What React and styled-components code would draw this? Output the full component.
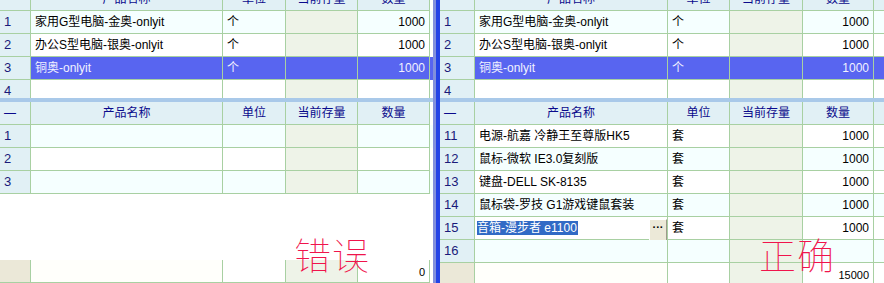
import styled, { createGlobalStyle } from 'styled-components'

const GlobalStyle = createGlobalStyle`
html, body {
  margin: 0;
  padding: 0;
  background: #ffffff;
  overflow: hidden;
}
body {
  font-family: "Liberation Sans", "Noto Sans CJK SC", sans-serif;
  font-size: 12px;
  color: #000;
}
`

const LINE = '#a8d0a2'
const HEAD_BG = '#e1f0f5'
const STOCK_BG = '#eef3e8'
const SEL_BG = '#5865f0'
const ALT_BG = '#f5ffff'
const FOOT_BG = '#ebe8d8'

const LEFT_COLS = '31px 192px 63px 72px 72px'
const RIGHT_COLS = '35px 193px 62px 73px 71px 10px'

const Page = styled.div`
position: relative;
display: flex;
width: 884px;
height: 283px;
overflow: hidden;
`
const Panel = styled.div`
display: flex;
flex-direction: column;
width: ${props => props.width}px;
flex: none;
background: #fdfffe;
`
const Splitter = styled.div`
width: 7px;
flex: none;
background: linear-gradient(to right, #8290dc 0, #8290dc 3px, #2443e6 3px, #2443e6 7px);
`
const TopGrid = styled.div`
height: 98px;
overflow: hidden;
flex: none;
`
const Shift = styled.div`
margin-top: -12px;
`
const HDivider = styled.div`
height: 4px;
background: #a9c9e9;
flex: none;
`
const BottomGrid = styled.div`
flex: 1;
display: flex;
flex-direction: column;
min-height: 0;
`
const Spacer = styled.div`
flex: 1;
background: #ffffff;
`
const Row = styled.div`
display: grid;
grid-template-columns: ${props => props.cols};
height: 23px;
flex: none;
background: ${props => props.sel ? SEL_BG : props.bg || '#ffffff'};
color: ${props => props.sel ? '#f2f2ff' : '#000'};
`
const Cell = styled.div`
box-sizing: border-box;
height: 23px;
border-right: 1px solid ${LINE};
border-bottom: 1px solid ${LINE};
line-height: 22px;
white-space: nowrap;
overflow: hidden;
padding: 0 4px;
`
const HeadCell = styled(Cell)`
background: ${HEAD_BG};
color: #0a0a8c;
text-align: ${props => props.left ? 'left' : 'center'};
`
const RowHead = styled(Cell)`
background: ${props => props.foot ? FOOT_BG : HEAD_BG};
color: #1a1a7a;
font-size: 13px;
text-align: left;
`
const NameCell = styled(Cell)`
background: ${props => props.tint || 'transparent'};
`
const StockCell = styled(Cell)`
background: ${props => props.sel ? 'transparent' : STOCK_BG};
`
const NumCell = styled(Cell)`
text-align: right;
`
const FootNum = styled(Cell)`
text-align: right;
font-size: 11px;
line-height: 24px;
`
const Filler = styled(Cell)`
border-right: none;
background: ${props => props.head ? HEAD_BG : 'transparent'};
`
const EditCell = styled(Cell)`
display: flex;
align-items: center;
justify-content: space-between;
background: #ffffff;
padding: 0 0 0 2px;
overflow: visible;
`
const Picked = styled.span`
background: #316ac5;
color: #ffffff;
line-height: 14px;
padding-right: 1px;
`
const DotsButton = styled.div`
box-sizing: border-box;
width: 18px;
height: 23px;
margin-top: 4px;
background: #ece9d8;
border: 1px solid;
border-color: #ffffff #9d9a8a #9d9a8a #ffffff;
font-weight: bold;
font-size: 11px;
line-height: 15px;
text-align: center;
color: #000;
`
const Stamp = styled.div`
position: absolute;
left: ${props => props.x}px;
top: ${props => props.y}px;
font-family: "Noto Sans CJK SC", sans-serif;
font-weight: 100;
font-size: 37px;
line-height: 1;
color: #f0144c;
letter-spacing: 1px;
`

const topRows = [
  { n: 1, name: '家用G型电脑-金奥-onlyit', unit: '个', qty: '1000', bg: ALT_BG },
  { n: 2, name: '办公S型电脑-银奥-onlyit', unit: '个', qty: '1000', bg: '#ffffff' },
  { n: 3, name: '铜奥-onlyit', unit: '个', qty: '1000', sel: true },
  { n: 4, name: '', unit: '', qty: '', bg: '#ffffff' },
]

const rightRows = [
  { n: 11, name: '电源-航嘉 冷静王至尊版HK5', unit: '套', qty: '1000', bg: '#ffffff' },
  { n: 12, name: '鼠标-微软 IE3.0复刻版', unit: '套', qty: '1000', bg: ALT_BG },
  { n: 13, name: '键盘-DELL SK-8135', unit: '套', qty: '1000', bg: '#ffffff' },
  { n: 14, name: '鼠标袋-罗技 G1游戏键鼠套装', unit: '套', qty: '1000', bg: ALT_BG },
  { n: 15, name: '音箱-漫步者 e1100', unit: '套', qty: '1000', bg: '#ffffff', edit: true },
  { n: 16, name: '', unit: '', qty: '', bg: ALT_BG },
]

const leftRows = [
  { n: 1, bg: ALT_BG },
  { n: 2, bg: '#ffffff' },
  { n: 3, bg: ALT_BG },
]

function HeaderRow({ cols, filler }) {
  return (
    <Row cols={cols}>
      <HeadCell left>—</HeadCell>
      <HeadCell>产品名称</HeadCell>
      <HeadCell>单位</HeadCell>
      <HeadCell>当前存量</HeadCell>
      <HeadCell>数量</HeadCell>
      {filler && <Filler head />}
    </Row>
  )
}

function DataRow({ cols, row, filler }) {
  return (
    <Row cols={cols} bg={row.bg} sel={row.sel}>
      <RowHead>{row.n}</RowHead>
      {row.edit ? (
        <EditCell>
          <Picked>{row.name}</Picked>
          <DotsButton>···</DotsButton>
        </EditCell>
      ) : (
        <NameCell>{row.name}</NameCell>
      )}
      <Cell>{row.unit}</Cell>
      <StockCell sel={row.sel} />
      <NumCell>{row.qty}</NumCell>
      {filler && <Filler />}
    </Row>
  )
}

function FooterRow({ cols, total, filler }) {
  return (
    <Row cols={cols} bg="#ffffff">
      <RowHead foot />
      <NameCell tint="#fffffb" />
      <Cell />
      <StockCell />
      <FootNum>{total}</FootNum>
      {filler && <Filler />}
    </Row>
  )
}

export default function App() {
  return (
    <Page>
      <GlobalStyle />
      <Panel width={433}>
        <TopGrid>
          <Shift>
            <HeaderRow cols={LEFT_COLS} />
            {topRows.map(r => <DataRow key={r.n} cols={LEFT_COLS} row={r} />)}
          </Shift>
        </TopGrid>
        <HDivider />
        <BottomGrid>
          <HeaderRow cols={LEFT_COLS} />
          {leftRows.map(r => <DataRow key={r.n} cols={LEFT_COLS} row={r} />)}
          <Spacer />
          <FooterRow cols={LEFT_COLS} total="0" />
        </BottomGrid>
      </Panel>
      <Splitter />
      <Panel width={444}>
        <TopGrid>
          <Shift>
            <HeaderRow cols={RIGHT_COLS} filler />
            {topRows.map(r => <DataRow key={r.n} cols={RIGHT_COLS} row={r} filler />)}
          </Shift>
        </TopGrid>
        <HDivider />
        <BottomGrid>
          <HeaderRow cols={RIGHT_COLS} filler />
          {rightRows.map(r => <DataRow key={r.n} cols={RIGHT_COLS} row={r} filler />)}
          <Spacer />
          <FooterRow cols={RIGHT_COLS} total="15000" filler />
        </BottomGrid>
      </Panel>
      <Stamp x={294} y={236}>错误</Stamp>
      <Stamp x={759} y={236}>正确</Stamp>
    </Page>
  )
}
